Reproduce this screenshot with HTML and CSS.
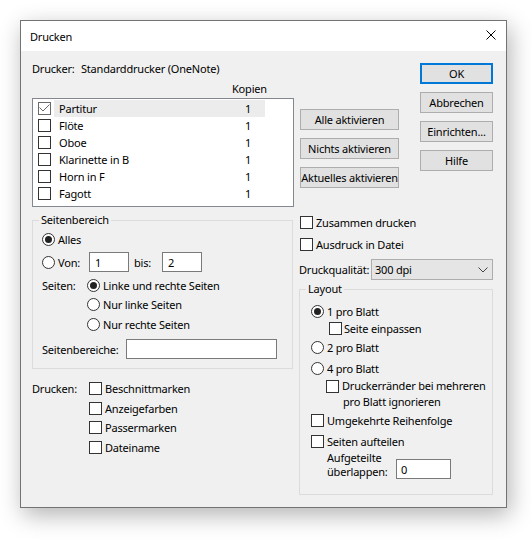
FILE: index.html
```html
<!DOCTYPE html>
<html lang="de">
<head>
<meta charset="utf-8">
<title>Drucken</title>
<link rel="stylesheet" href="styles.css">
</head>
<body>
<div class="page">
  <div class="dialog">
    <div class="titlebar">
      <span class="title">Drucken</span>
      <svg class="close" width="10" height="10" viewBox="0 0 10 10"><path d="M0.5 0.5 L9.5 9.5 M9.5 0.5 L0.5 9.5" stroke="#000" stroke-width="1" fill="none"/></svg>
    </div>
    <div class="content">
      <div class="top">
        <div class="main">
          <div class="printer-row"><span class="printer-label">Drucker:</span><span>Standarddrucker (OneNote)</span></div>
          <div class="kopien-head"><span class="kopien">Kopien</span></div>
          <div class="list-row">
            <div class="listbox">
              <div class="item"><span class="cb checked"><svg width="11" height="11" viewBox="0 0 11 11"><path d="M0.5 4.5 L4 8 L10.5 1.5" stroke="#6a6a6a" stroke-width="1" fill="none"/></svg></span><div class="cell sel"><span class="name">Partitur</span><span class="num">1</span></div></div>
              <div class="item"><span class="cb"></span><div class="cell"><span class="name">Flöte</span><span class="num">1</span></div></div>
              <div class="item"><span class="cb"></span><div class="cell"><span class="name">Oboe</span><span class="num">1</span></div></div>
              <div class="item"><span class="cb"></span><div class="cell"><span class="name">Klarinette in B</span><span class="num">1</span></div></div>
              <div class="item"><span class="cb"></span><div class="cell"><span class="name">Horn in F</span><span class="num">1</span></div></div>
              <div class="item"><span class="cb"></span><div class="cell"><span class="name">Fagott</span><span class="num">1</span></div></div>
            </div>
            <div class="mid-buttons">
              <div class="btn wide">Alle aktivieren</div>
              <div class="btn wide">Nichts aktivieren</div>
              <div class="btn wide">Aktuelles aktivieren</div>
            </div>
          </div>
        </div>
        <div class="side-buttons">
          <div class="btn side default">OK</div>
          <div class="btn side">Abbrechen</div>
          <div class="btn side">Einrichten...</div>
          <div class="btn side">Hilfe</div>
        </div>
      </div>

      <div class="bottom">
        <div class="left-col">
          <fieldset class="group range">
            <legend>Seitenbereich</legend>
            <div class="row r-alles"><span class="radio"><span class="rb on"></span>Alles</span></div>
            <div class="row r-von">
              <span class="radio von"><span class="rb"></span>Von:</span>
              <div class="edit small">1</div>
              <span class="bis">bis:</span>
              <div class="edit small">2</div>
            </div>
            <div class="seiten">
              <span class="seiten-label">Seiten:</span>
              <div class="seiten-opts">
                <div class="row h19"><span class="radio"><span class="rb on"></span>Linke und rechte Seiten</span></div>
                <div class="row h19"><span class="radio"><span class="rb"></span>Nur linke Seiten</span></div>
                <div class="row h20"><span class="radio"><span class="rb"></span>Nur rechte Seiten</span></div>
              </div>
            </div>
            <div class="row r-bereiche">
              <span class="bereiche-label">Seitenbereiche:</span>
              <div class="edit long"></div>
            </div>
          </fieldset>
          <div class="drucken">
            <span class="drucken-label">Drucken:</span>
            <div class="drucken-opts">
              <div class="row h195"><span class="check"><span class="cb"></span>Beschnittmarken</span></div>
              <div class="row h195"><span class="check"><span class="cb"></span>Anzeigefarben</span></div>
              <div class="row h195"><span class="check"><span class="cb"></span>Passermarken</span></div>
              <div class="row h195"><span class="check"><span class="cb"></span>Dateiname</span></div>
            </div>
          </div>
        </div>

        <div class="right-col">
          <div class="row r-zus"><span class="check"><span class="cb"></span>Zusammen drucken</span></div>
          <div class="row r-datei"><span class="check"><span class="cb"></span>Ausdruck in Datei</span></div>
          <div class="row r-qual">
            <span class="qual-label">Druckqualität:</span>
            <div class="combo"><span>300 dpi</span><svg class="chev" width="10" height="6" viewBox="0 0 10 6"><path d="M0.5 0.5 L5 5 L9.5 0.5" stroke="#444" stroke-width="1" fill="none"/></svg></div>
          </div>
          <fieldset class="group layout">
            <legend>Layout</legend>
            <div class="row l1"><span class="radio"><span class="rb on"></span>1 pro Blatt</span></div>
            <div class="row l2"><span class="check tight"><span class="cb"></span>Seite einpassen</span></div>
            <div class="row l3"><span class="radio"><span class="rb"></span>2 pro Blatt</span></div>
            <div class="row l4"><span class="radio"><span class="rb"></span>4 pro Blatt</span></div>
            <div class="l5"><span class="cb"></span><span class="l5-text">Druckerränder bei mehreren<br><span class="l5-line2">pro Blatt ignorieren</span></span></div>
            <div class="row l6"><span class="check"><span class="cb"></span>Umgekehrte Reihenfolge</span></div>
            <div class="row l7"><span class="check"><span class="cb"></span>Seiten aufteilen</span></div>
            <div class="l8">
              <span class="l8-label"><span class="l8-line">Aufgeteilte</span><span class="l8-line">überlappen:</span></span>
              <div class="edit tiny">0</div>
            </div>
          </fieldset>
        </div>
      </div>
    </div>
  </div>
</div>
</body>
</html>
```
FILE: styles.css
```css
* { box-sizing: border-box; }
html, body { margin: 0; padding: 0; }
body {
  background: #ffffff;
  font-family: "Noto Sans", "Open Sans", sans-serif;
  font-size: 11px;
  letter-spacing: -0.2px;
  color: #000;
  min-height: 546px;
}
.page { padding: 20px 0 30px 20px; }
.dialog {
  width: 487px;
  border: 1px solid #737373;
  background: #f0f0f0;
  box-shadow: 3px 7px 22px rgba(0, 0, 0, 0.3);
}
.titlebar {
  height: 30px;
  background: #fff;
  display: flex;
  align-items: center;
  justify-content: space-between;
  padding: 0 10px 0 9px;
}
.close { display: block; margin-bottom: 2px; }
.content {
  height: 456px;
  padding: 10px 13px 0 11px;
}
.top { display: flex; }
.main { width: 367px; }
.printer-row { height: 16px; line-height: 16px; display: flex; }
.printer-label { width: 49px; }
.kopien-head { height: 16px; line-height: 16px; margin-top: 4px; padding-left: 200px; }
.kopien { display: inline-block; width: 32px; text-align: center; white-space: nowrap; }
.list-row { display: flex; gap: 6px; margin-top: 1px; }
.listbox {
  width: 262px;
  height: 109px;
  border: 1px solid #828790;
  background: #fff;
  padding: 1px 0 4px 5px;
}
.item { display: flex; align-items: center; height: 17px; }
.item .cb { margin-right: 3px; }
.cell {
  width: 211px;
  height: 17px;
  display: flex;
  align-items: center;
  padding-left: 5px;
}
.cell.sel { background: #ececec; }
.name { width: 173px; white-space: nowrap; }
.num { width: 32px; text-align: center; }

.btn {
  display: flex;
  align-items: center;
  justify-content: center;
  height: 21px;
  background: #e1e1e1;
  border: 1px solid #adadad;
  white-space: nowrap;
}
.mid-buttons { display: flex; flex-direction: column; gap: 8px; margin-top: 11px; }
.btn.wide { width: 99px; }
.side-buttons { display: flex; flex-direction: column; gap: 8px; margin: 2px 0 0 21px; }
.btn.side { width: 73px; }
.btn.default { border: 2px solid #0078d7; }

.cb {
  display: inline-block;
  flex: none;
  width: 13px;
  height: 13px;
  border: 1px solid #333;
  background: #fff;
}
.cb.checked { border-color: #6a6a6a; }
.cb svg { display: block; }
.rb {
  display: inline-flex;
  align-items: center;
  justify-content: center;
  flex: none;
  width: 13px;
  height: 13px;
  border: 1px solid #333;
  border-radius: 50%;
  background: #fff;
}
.rb.on::after {
  content: "";
  width: 7px;
  height: 7px;
  border-radius: 50%;
  background: #222;
}
.radio, .check { display: flex; align-items: center; gap: 3px; white-space: nowrap; }
.check.tight { gap: 2px; }
.row { display: flex; align-items: center; }
.h19 { height: 19px; }
.h20 { height: 20px; }
.h195 { height: 19.5px; }

.edit {
  height: 20px;
  background: #fff;
  border: 1px solid #7a7a7a;
  display: flex;
  align-items: center;
  padding-left: 5px;
}
.edit.small { width: 40px; }
.edit.long { width: 151px; }
.edit.tiny { width: 55px; padding-left: 4px; }

.bottom { display: flex; gap: 6px; margin-top: 5px; }
.left-col { width: 261px; }
.right-col { width: 194px; }

.group {
  margin: 0;
  min-width: 0;
  border: 1px solid #dcdcdc;
}
.group legend {
  line-height: 16px;
  height: 16px;
  padding: 0 2px;
}
.range { width: 261px; padding: 0 0 9px 9px; }
.range legend { margin-left: -3px; }
.r-alles { height: 20px; margin-top: 1px; }
.r-von { height: 20px; margin-top: 3px; }
.radio.von { width: 47px; }
.bis { width: 28px; margin-left: 5px; }
.seiten { display: flex; margin-top: 4px; }
.seiten-label { width: 45px; line-height: 19px; }
.r-bereiche { height: 20px; margin-top: 5px; }
.bereiche-label { width: 84px; }

.drucken { display: flex; margin-top: 10px; }
.drucken-label { width: 57px; line-height: 19.5px; }

.r-zus { height: 20px; padding-left: 1px; }
.r-datei { height: 20px; margin-top: 2px; padding-left: 1px; }
.r-qual { height: 21px; margin-top: 5px; }
.qual-label { width: 72px; white-space: nowrap; }
.combo {
  width: 122px;
  height: 21px;
  background: #e5e5e5;
  border: 1px solid #adadad;
  display: flex;
  align-items: center;
  padding-left: 3px;
}
.chev { display: block; margin-left: auto; margin-right: 4px; }

.layout { width: 194px; margin-top: 1px; padding: 0 0 15px 11px; }
.layout legend { margin-left: -5px; }
.l1 { height: 18px; margin-top: 5px; }
.l2 { height: 17px; padding-left: 18px; }
.l3 { height: 20px; }
.l4 { height: 20px; margin-top: 1px; }
.l5 { display: flex; align-items: flex-start; padding-left: 15px; line-height: 16px; }
.l5 .cb { margin-top: 2px; margin-right: 3px; }
.l5-text { white-space: nowrap; }
.l5-line2 { padding-left: 1px; }
.l6 { height: 20px; }
.l7 { height: 20px; margin-top: 1px; }
.l8 { display: flex; align-items: flex-end; }
.l8-label { width: 85px; padding-left: 16px; display: flex; flex-direction: column; }
.l8-line { display: block; height: 14px; line-height: 14px; white-space: nowrap; }
```
